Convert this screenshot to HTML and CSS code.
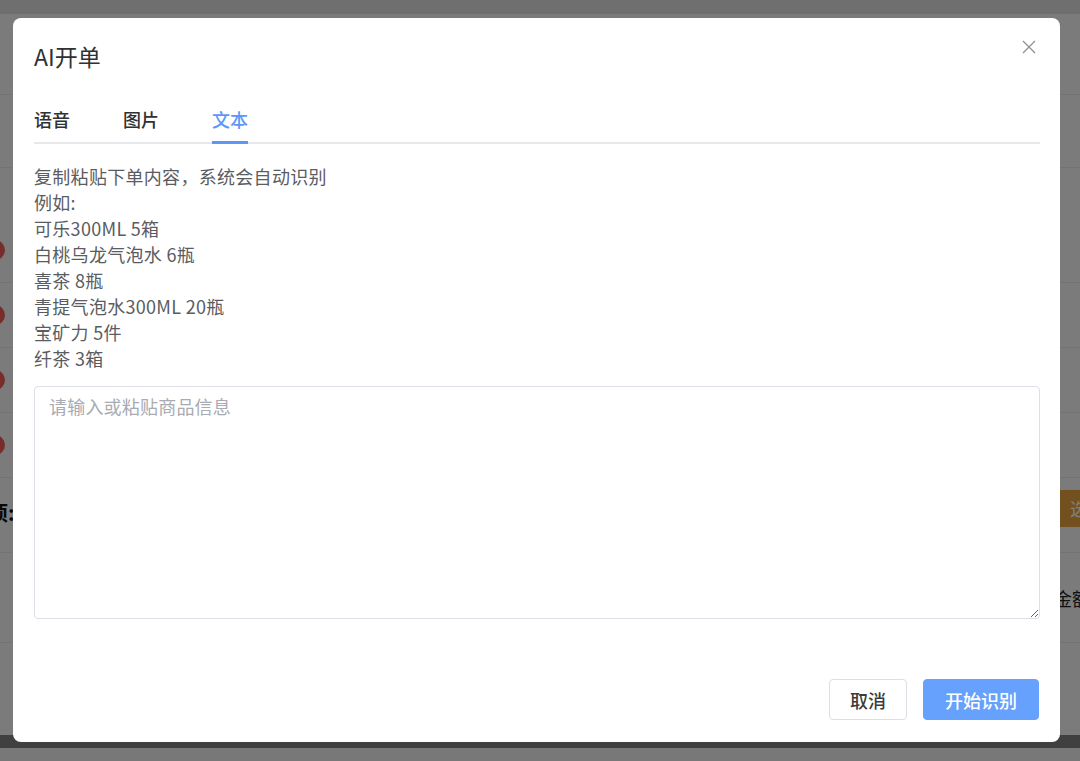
FILE: index.html
```html
<!DOCTYPE html>
<html lang="zh-CN">
<head>
    <meta charset="UTF-8">
    <meta name="viewport" content="width=device-width, initial-scale=1.0">
    <title>AI开单</title>
    <link rel="stylesheet" href="styles.css">
</head>
<body>
    <div class="page">
        <div class="page-top"></div>
        <div class="row row-a"></div>
        <div class="row row-b"></div>
        <div class="row row-c plain"></div>
        <div class="row row-d"><span class="dot"></span></div>
        <div class="row row-d"><span class="dot"></span></div>
        <div class="row row-d"><span class="dot"></span></div>
        <div class="row row-d"><span class="dot"></span></div>
        <div class="row row-e">
            <span class="label">事项:</span>
            <span class="btn-warn">选择</span>
        </div>
        <div class="row row-f">
            <span></span>
            <span class="amount">金额</span>
        </div>
        <div class="row row-g plain"></div>
        <div class="page-band"></div>
        <div class="page-foot"></div>
    </div>

    <div class="mask"></div>

    <div class="dialog">
        <button class="close" aria-label="关闭">
            <svg width="14" height="14" viewBox="0 0 14 14">
                <path d="M1 1 L13 13 M13 1 L1 13" stroke="#8e9095" stroke-width="1.3" fill="none"/>
            </svg>
        </button>
        <div class="title">AI开单</div>

        <div class="tabs">
            <div class="tab">语音</div>
            <div class="tab">图片</div>
            <div class="tab active">文本</div>
        </div>

        <div class="hint">
            <div>复制粘贴下单内容，系统会自动识别</div>
            <div>例如:</div>
            <div>可乐300ML 5箱</div>
            <div>白桃乌龙气泡水 6瓶</div>
            <div>喜茶 8瓶</div>
            <div>青提气泡水300ML 20瓶</div>
            <div>宝矿力 5件</div>
            <div>纤茶 3箱</div>
        </div>

        <textarea class="input" placeholder="请输入或粘贴商品信息"></textarea>

        <div class="footer">
            <button class="btn">取消</button>
            <button class="btn primary">开始识别</button>
        </div>
    </div>
</body>
</html>
```

FILE: styles.css
```css
body {
    margin: 0;
    width: 1080px;
    height: 761px;
    overflow: hidden;
    position: relative;
    font-family: "Noto Sans CJK SC", "Noto Sans", sans-serif;
}

/* page behind the dialog */
.page {
    display: flex;
    flex-direction: column;
    height: 761px;
    background: #f7f7f7;
    overflow: hidden;
}

.page-top {
    height: 14px;
    background: #dedede;
}

.row {
    display: flex;
    align-items: center;
    justify-content: space-between;
    border-bottom: 1px solid #e6e6e6;
    box-sizing: border-box;
}

.row.plain {
    border-bottom: none;
}

.row-a { height: 81px; }
.row-b { height: 73px; }
.row-c { height: 50px; }
.row-d { height: 65px; }
.row-e { height: 75px; }
.row-f { height: 90px; }
.row-g { height: 92px; }

.dot {
    width: 20px;
    height: 20px;
    border-radius: 50%;
    background: #f05a5a;
    margin-left: -15px;
}

.label {
    font-size: 20px;
    font-weight: 700;
    color: #111;
    margin-left: -32px;
    margin-top: -6px;
}

.btn-warn {
    background: #e6a23c;
    color: #fff;
    font-size: 18px;
    height: 37px;
    line-height: 37px;
    padding: 0 14px;
    margin-right: -40px;
    align-self: flex-start;
    margin-top: 12px;
}

.amount {
    font-size: 18px;
    color: #222;
    margin-right: -10px;
}

.page-band {
    height: 13px;
    background: #808080;
}

.page-foot {
    flex: 1;
    background: #f0f0f0;
}

.mask {
    position: absolute;
    inset: 0;
    background: rgba(0, 0, 0, 0.5);
}

/* dialog */
.dialog {
    position: absolute;
    left: 13px;
    top: 18px;
    width: 1047px;
    height: 724px;
    box-sizing: border-box;
    background: #fff;
    border-radius: 8px;
    padding: 22px 20px 22px 21px;
    display: flex;
    flex-direction: column;
}

.close {
    position: absolute;
    top: 22px;
    right: 24px;
    border: none;
    background: none;
    padding: 0;
    width: 14px;
    height: 14px;
    cursor: pointer;
}

.title {
    font-size: 23px;
    line-height: 32px;
    color: #303133;
}

.tabs {
    display: flex;
    gap: 53px;
    margin-top: 27px;
    border-bottom: 2px solid #e6e8eb;
}

.tab {
    font-size: 18px;
    font-weight: 500;
    line-height: 40px;
    padding-bottom: 3px;
    color: #303133;
    position: relative;
}

.tab.active {
    color: #5c97f6;
}

.tab.active::after {
    content: '';
    position: absolute;
    left: 0;
    right: 0;
    bottom: -2px;
    height: 3px;
    background: #5c97f6;
}

.hint {
    margin-top: 19px;
    font-size: 18px;
    line-height: 26px;
    letter-spacing: 0.3px;
    color: #5a5c61;
}

.input {
    margin-top: 15px;
    height: 233px;
    width: 100%;
    box-sizing: border-box;
    border: 1px solid #dcdfe6;
    border-radius: 4px;
    padding: 6px 14px;
    font-family: inherit;
    font-size: 18px;
    line-height: 26px;
    letter-spacing: 0.2px;
    color: #303133;
    outline: none;
}

.input::placeholder {
    color: #a8abb2;
}

.footer {
    margin-top: auto;
    display: flex;
    justify-content: flex-end;
    gap: 16px;
    padding-right: 1px;
}

.btn {
    height: 41px;
    padding: 0 20px;
    border: 1px solid #dcdfe6;
    border-radius: 4px;
    background: #fff;
    font-family: inherit;
    font-size: 18px;
    font-weight: 500;
    color: #3a3b3e;
    cursor: pointer;
}

.btn.primary {
    background: #66a1fd;
    border-color: #66a1fd;
    color: #fff;
    padding: 0 21px;
}
```
